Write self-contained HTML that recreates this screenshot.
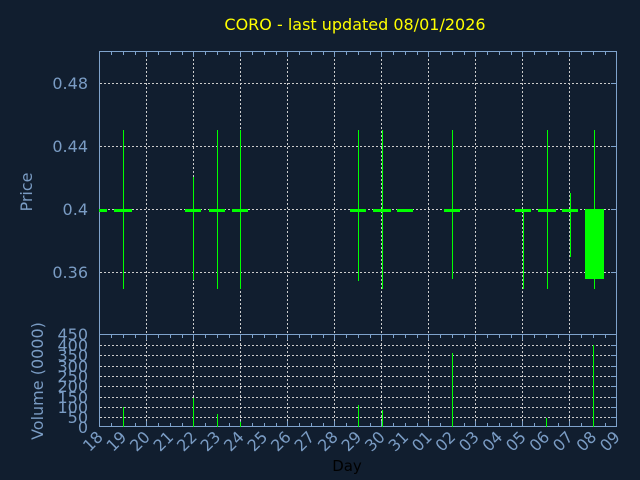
<!DOCTYPE html>
<html><head><style>html,body{margin:0;padding:0;background:#111e2f}svg{display:block}</style></head><body>
<svg width="640" height="480" xmlns="http://www.w3.org/2000/svg" font-family="DejaVu Sans, Liberation Sans, sans-serif">
<rect width="640" height="480" fill="#111e2f"/>
<text x="355" y="30" fill="#ffff00" font-size="16" text-anchor="middle">CORO - last updated 08/01/2026</text>
<g stroke="#cccccc" stroke-dasharray="2,2" stroke-width="1">
<path d="M146.5 51V427M193.5 51V427M240.5 51V427M287.5 51V427M334.5 51V427M381.5 51V427M428.5 51V427M475.5 51V427M522.5 51V427M569.5 51V427"/>
<path d="M100 83.5H616M100 146.5H616M100 209.5H616M100 272.5H616"/>
<path d="M100 345.5H616M100 355.5H616M100 366.5H616M100 376.5H616M100 386.5H616M100 397.5H616M100 407.5H616M100 417.5H616"/>
</g>
<g stroke="#7fa3cc" fill="none">
<rect x="99.5" y="51.5" width="517" height="283"/>
<rect x="99.5" y="334.5" width="517" height="92"/>
<path d="M111.5 52v3M123.5 52v3M135.5 52v3M146.5 52v5M158.5 52v3M170.5 52v3M182.5 52v3M193.5 52v5M205.5 52v3M217.5 52v3M229.5 52v3M240.5 52v5M252.5 52v3M264.5 52v3M276.5 52v3M287.5 52v5M299.5 52v3M311.5 52v3M323.5 52v3M334.5 52v5M346.5 52v3M358.5 52v3M370.5 52v3M381.5 52v5M393.5 52v3M405.5 52v3M417.5 52v3M428.5 52v5M440.5 52v3M452.5 52v3M464.5 52v3M475.5 52v5M487.5 52v3M499.5 52v3M511.5 52v3M522.5 52v5M534.5 52v3M546.5 52v3M558.5 52v3M569.5 52v5M581.5 52v3M593.5 52v3M605.5 52v3"/>
<path d="M111.5 335v3M123.5 335v3M135.5 335v3M146.5 335v5M158.5 335v3M170.5 335v3M182.5 335v3M193.5 335v5M205.5 335v3M217.5 335v3M229.5 335v3M240.5 335v5M252.5 335v3M264.5 335v3M276.5 335v3M287.5 335v5M299.5 335v3M311.5 335v3M323.5 335v3M334.5 335v5M346.5 335v3M358.5 335v3M370.5 335v3M381.5 335v5M393.5 335v3M405.5 335v3M417.5 335v3M428.5 335v5M440.5 335v3M452.5 335v3M464.5 335v3M475.5 335v5M487.5 335v3M499.5 335v3M511.5 335v3M522.5 335v5M534.5 335v3M546.5 335v3M558.5 335v3M569.5 335v5M581.5 335v3M593.5 335v3M605.5 335v3"/>
<path d="M111.5 426v-3M123.5 426v-3M135.5 426v-3M146.5 426v-5M158.5 426v-3M170.5 426v-3M182.5 426v-3M193.5 426v-5M205.5 426v-3M217.5 426v-3M229.5 426v-3M240.5 426v-5M252.5 426v-3M264.5 426v-3M276.5 426v-3M287.5 426v-5M299.5 426v-3M311.5 426v-3M323.5 426v-3M334.5 426v-5M346.5 426v-3M358.5 426v-3M370.5 426v-3M381.5 426v-5M393.5 426v-3M405.5 426v-3M417.5 426v-3M428.5 426v-5M440.5 426v-3M452.5 426v-3M464.5 426v-3M475.5 426v-5M487.5 426v-3M499.5 426v-3M511.5 426v-3M522.5 426v-5M534.5 426v-3M546.5 426v-3M558.5 426v-3M569.5 426v-5M581.5 426v-3M593.5 426v-3M605.5 426v-3"/>
<path d="M616 83.5h-5M616 146.5h-5M616 209.5h-5M616 272.5h-5M616 345.5h-5M616 355.5h-5M616 366.5h-5M616 376.5h-5M616 386.5h-5M616 397.5h-5M616 407.5h-5M616 417.5h-5"/>
</g>
<g fill="#7a9cc4" font-size="16" text-anchor="end">
<text x="88" y="89">0.48</text><text x="88" y="152">0.44</text><text x="88" y="215">0.4</text><text x="88" y="278">0.36</text>
<text x="88" y="340">450</text><text x="88" y="351">400</text><text x="88" y="361">350</text><text x="88" y="372">300</text><text x="88" y="382">250</text><text x="88" y="392">200</text><text x="88" y="403">150</text><text x="88" y="413">100</text><text x="88" y="423">50</text><text x="88" y="433">0</text>
</g>
<text transform="translate(32,192) rotate(-90)" fill="#7a9cc4" font-size="16" text-anchor="middle">Price</text>
<text transform="translate(43,381) rotate(-90)" fill="#7a9cc4" font-size="16" text-anchor="middle">Volume (0000)</text>
<g fill="#7a9cc4" font-size="16" text-anchor="end">
<text transform="translate(104,438) rotate(-45)">18</text><text transform="translate(127.5,438) rotate(-45)">19</text><text transform="translate(151,438) rotate(-45)">20</text><text transform="translate(174.5,438) rotate(-45)">21</text><text transform="translate(198,438) rotate(-45)">22</text><text transform="translate(221.5,438) rotate(-45)">23</text><text transform="translate(245,438) rotate(-45)">24</text><text transform="translate(268.5,438) rotate(-45)">25</text><text transform="translate(292,438) rotate(-45)">26</text><text transform="translate(315.5,438) rotate(-45)">27</text><text transform="translate(339,438) rotate(-45)">28</text><text transform="translate(362.5,438) rotate(-45)">29</text><text transform="translate(386,438) rotate(-45)">30</text><text transform="translate(409.5,438) rotate(-45)">31</text><text transform="translate(433,438) rotate(-45)">01</text><text transform="translate(456.5,438) rotate(-45)">02</text><text transform="translate(480,438) rotate(-45)">03</text><text transform="translate(503.5,438) rotate(-45)">04</text><text transform="translate(527,438) rotate(-45)">05</text><text transform="translate(550.5,438) rotate(-45)">06</text><text transform="translate(574,438) rotate(-45)">07</text><text transform="translate(597.5,438) rotate(-45)">08</text><text transform="translate(621,438) rotate(-45)">09</text>
</g>
<text x="347" y="471" fill="#000" font-size="15" text-anchor="middle">Day</text>
<g stroke="#00ff00" stroke-width="1">
<path d="M123.5 130V289M193.5 177V280M217.5 130V289M240.5 130V289M358.5 130V281M382.5 130V289M452.5 130V279M523.5 209V289M547.5 130V289M570.5 193V257M594.5 130V289"/>
<path d="M123.5 407V427M193.5 398V427M217.5 414V427M240.5 422V427M358.5 405V427M382.5 410V427M452.5 353V427M546.5 418V427M593.5 345V427"/>
</g>
<g fill="#00ff00">
<rect x="99" y="209" width="8" height="3"/><rect x="114" y="209" width="18" height="3"/><rect x="185" y="209" width="16" height="3"/><rect x="209" y="209" width="16" height="3"/><rect x="232" y="209" width="16" height="3"/><rect x="350" y="209" width="16" height="3"/><rect x="373" y="209" width="18" height="3"/><rect x="397" y="209" width="16" height="3"/><rect x="444" y="209" width="16" height="3"/><rect x="515" y="209" width="16" height="3"/><rect x="538" y="209" width="18" height="3"/><rect x="562" y="209" width="16" height="3"/>
<rect x="585" y="209" width="19" height="70"/>
</g>
</svg>
</body></html>
